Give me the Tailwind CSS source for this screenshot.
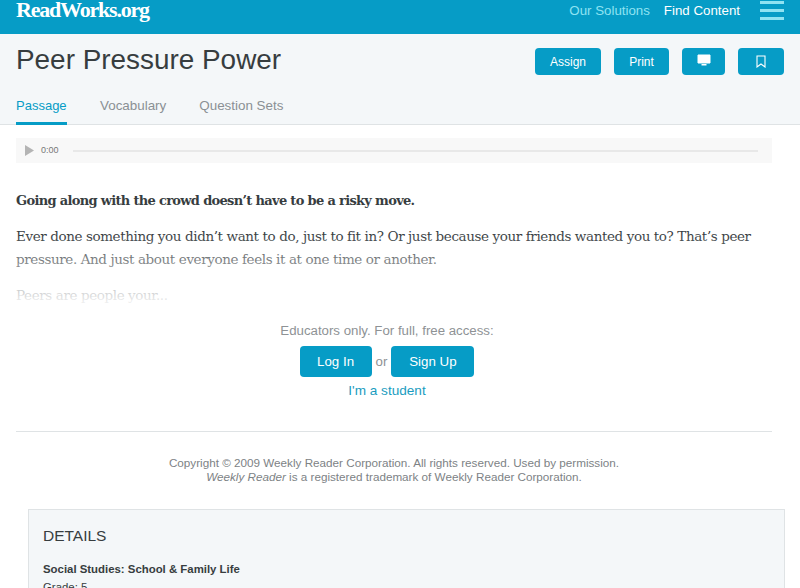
<!DOCTYPE html>
<html lang="en">
<head>
  <meta charset="UTF-8">
  <title>Peer Pressure Power</title>
  <script src="https://cdn.jsdelivr.net/npm/@tailwindcss/browser@4"></script>
</head>
<body class="bg-white h-[588px] overflow-hidden font-['Liberation_Sans',sans-serif] text-[#373d3f]">
  <!-- Top bar -->
  <header class="h-[34px] bg-[#069cc6] flex items-start justify-between pl-4 pr-[16px] overflow-hidden">
    <div class="font-['Liberation_Serif',serif] font-bold text-[22px] leading-[19px] tracking-[-1.2px] text-white">ReadWorks.org</div>
    <nav class="flex items-start">
      <a class="text-[13.3px] leading-[22px] text-[#8fe3f2]">Our Solutions</a>
      <a class="text-[13.3px] leading-[22px] text-white ml-[14px]">Find Content</a>
      <div class="ml-5 w-[24px] flex flex-col gap-[5px] pt-[1px]">
        <span class="h-[3px] bg-[#8fe3f2]"></span>
        <span class="h-[3px] bg-[#8fe3f2]"></span>
        <span class="h-[3px] bg-[#8fe3f2]"></span>
      </div>
    </nav>
  </header>

  <!-- Title and tabs -->
  <section class="h-[91px] bg-[#f4f7f9] border-b border-[#dfe3e5] px-4">
    <div class="flex justify-between pt-[14px]">
      <h1 class="text-[27.9px] leading-[24px] text-[#373d3f]">Peer Pressure Power</h1>
      <div class="flex gap-[13px] text-white text-[12px]">
        <button class="w-[66px] h-[27px] rounded-[4px] bg-[#069cc6]">Assign</button>
        <button class="w-[55px] h-[27px] rounded-[4px] bg-[#069cc6]">Print</button>
        <button class="w-[43px] h-[27px] rounded-[4px] bg-[#069cc6] flex items-center justify-center pb-[2px]">
          <svg width="14" height="13" viewBox="0 0 14 13"><path d="M1 1h12v8H1z" fill="#fff" stroke="#fff"/><path d="M4.5 10h5v1.5h-5z" fill="#fff"/></svg>
        </button>
        <button class="w-[46px] h-[27px] rounded-[4px] bg-[#069cc6] flex items-center justify-center">
          <svg width="10" height="13" viewBox="0 0 10 13"><path d="M1 1h8v11L5 9l-4 3z" fill="none" stroke="#fff" stroke-width="1.1"/></svg>
        </button>
      </div>
    </div>
    <div class="flex gap-[33px] mt-[16px] text-[13.4px] text-[#8a9094]">
      <a class="h-[34px] w-[51px] pt-[6px] leading-[18px] border-b-[3px] border-[#069cc6] text-[#069cc6] text-[13px]">Passage</a>
      <a class="pt-[6px] leading-[18px]">Vocabulary</a>
      <a class="pt-[6px] leading-[18px]">Question Sets</a>
    </div>
  </section>

  <main class="px-4 pt-[13px]">
    <!-- Audio player -->
    <div class="h-[25px] w-[756px] bg-[#f8f8f8] flex items-center pl-[9px] pr-[14px]">
      <svg width="9" height="11" viewBox="0 0 9 11"><path d="M0 0l9 5.5L0 11z" fill="#b4b4b4"/></svg>
      <span class="ml-[7px] text-[9px] text-[#777]">0:00</span>
      <span class="ml-[14px] flex-1 h-[2px] bg-[#e8e8e8]"></span>
    </div>

    <!-- Passage preview -->
    <div class="relative w-[756px] mt-[26px] h-[121px] font-['DejaVu_Serif',serif] text-[13.5px] leading-[23px] overflow-hidden">
      <p class="font-bold text-[13px] tracking-[-0.68px]">Going along with the crowd doesn’t have to be a risky move.</p>
      <p class="mt-[13px] tracking-[-0.4px]">Ever done something you didn’t want to do, just to fit in? Or just because your friends wanted you to? That’s peer pressure. And just about everyone feels it at one time or another.</p>
      <p class="mt-[13px] tracking-[-0.4px]">Peers are people your...</p>
      <div class="absolute left-0 right-0 top-[44px] h-[76px] bg-gradient-to-b from-white/0 to-white"></div>
    </div>

    <!-- Access -->
    <div class="w-[742px] text-center mt-[11px]">
      <p class="text-[13.25px] leading-[20px] text-[#8e9295]">Educators only. For full, free access:</p>
      <div class="flex justify-center items-center mt-[5px] text-[13.3px]">
        <button class="w-[72px] h-[31px] rounded-[4px] bg-[#069cc6] text-white">Log In</button>
        <span class="mx-[4px] text-[#8e9295]">or</span>
        <button class="w-[83px] h-[31px] rounded-[4px] bg-[#069cc6] text-white">Sign Up</button>
      </div>
      <a class="block mt-[4px] text-[13.6px] leading-[20px] text-[#1a9cc0]">I'm a student</a>
    </div>

    <hr class="w-[756px] mt-[30px] border-[#dfe3e5]">

    <div class="w-[756px] mt-[24px] text-center text-[11.7px] leading-[14px] text-[#7d8285]">
      <p>Copyright © 2009 Weekly Reader Corporation. All rights reserved. Used by permission.</p>
      <p><em>Weekly Reader</em> is a registered trademark of Weekly Reader Corporation.</p>
    </div>

    <!-- Details -->
    <div class="ml-3 mt-[25px] w-[757px] h-[120px] bg-[#f4f7f9] border border-[#dfe3e5] px-[14px] pt-4">
      <h2 class="text-[15.5px] leading-[20px] text-[#373d3f]">DETAILS</h2>
      <p class="mt-[15px] text-[11.4px] leading-[16px] font-bold">Social Studies: School &amp; Family Life</p>
      <p class="text-[11.4px] leading-[20px]">Grade: 5</p>
    </div>
  </main>
</body>
</html>
